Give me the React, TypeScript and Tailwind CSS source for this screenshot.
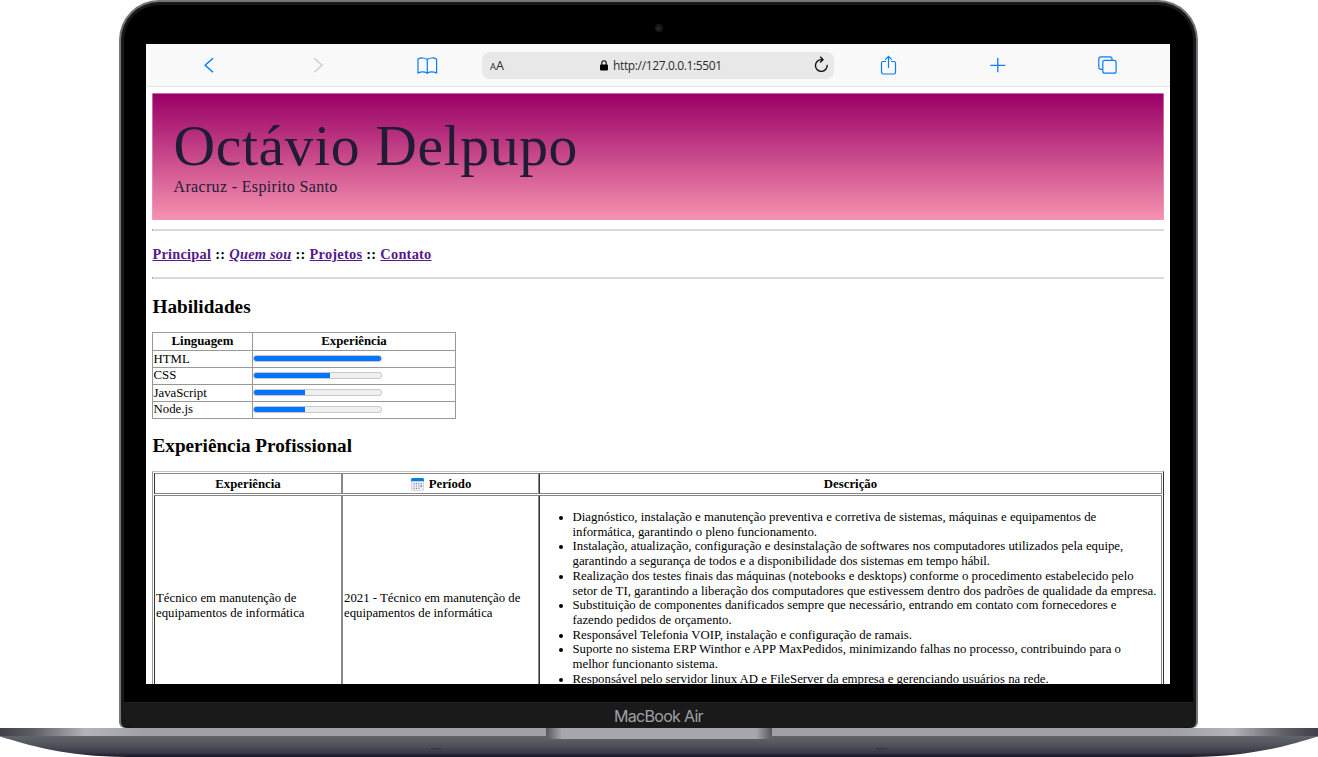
import React from "react";

const skills = [
  { name: "HTML", value: 100, row: "h-[17px] leading-[16px]" },
  { name: "CSS", value: 60, row: "h-[17px] leading-[14px]" },
  { name: "JavaScript", value: 40, row: "h-[17px] leading-[16px]" },
  { name: "Node.js", value: 40, row: "h-[17px] leading-[14px]" },
];

const duties: string[][] = [
  ["Diagnóstico, instalação e manutenção preventiva e corretiva de sistemas, máquinas e equipamentos de", "informática, garantindo o pleno funcionamento."],
  ["Instalação, atualização, configuração e desinstalação de softwares nos computadores utilizados pela equipe,", "garantindo a segurança de todos e a disponibilidade dos sistemas em tempo hábil."],
  ["Realização dos testes finais das máquinas (notebooks e desktops) conforme o procedimento estabelecido pelo", "setor de TI, garantindo a liberação dos computadores que estivessem dentro dos padrões de qualidade da empresa."],
  ["Substituição de componentes danificados sempre que necessário, entrando em contato com fornecedores e", "fazendo pedidos de orçamento."],
  ["Responsável Telefonia VOIP, instalação e configuração de ramais."],
  ["Suporte no sistema ERP Winthor e APP MaxPedidos, minimizando falhas no processo, contribuindo para o", "melhor funcionanto sistema."],
  ["Responsável pelo servidor linux AD e FileServer da empresa e gerenciando usuários na rede."],
];

function Toolbar() {
  return (
    <div className="flex h-[43px] shrink-0 border-b border-[#e4e4e4] bg-[#f9f9f9]">
      <svg width="1024" height="42" viewBox="146 44 1024 42" fill="none" stroke="#0a7cff" strokeWidth="1.2" className="absolute">
        <path d="M213 58.3 L205.2 65.3 L213 72.2" strokeWidth="1.5" />
        <path d="M314.3 58.3 L322 65.3 L314.3 72.2" stroke="#c8c8c8" />
        <path d="M427.3 59.5 V72.5 M427.3 59.5 C425 57.5 420 57.5 418 59.3 V73 C421 71.7 425 71.8 427.3 73.2 C429.5 71.8 433.5 71.7 436.6 73 V59.3 C434.5 57.5 429.5 57.5 427.3 59.5" />
        <path d="M886 61.5 H883 Q881.5 61.5 881.5 63 V72.3 Q881.5 74 883.2 74 H893.8 Q895.5 74 895.5 72.3 V63 Q895.5 61.5 894 61.5 H891 M888.5 68 V56.7 M885.3 59.6 L888.5 56.4 L891.7 59.6" />
        <path d="M990.3 65.4 H1005.3 M997.8 58 V72.3" strokeWidth="1.3" />
        <rect x="1102.8" y="60.4" width="13.3" height="12.8" rx="2" />
        <path d="M1102.5 69.3 H1101 Q1098.8 69.3 1098.8 67.1 V59 Q1098.8 56.8 1101 56.8 H1110 Q1112 56.8 1112 59 V60" />
      </svg>
      <div className="ml-[336px] mt-2 flex h-[27px] w-[352px] items-center rounded-lg bg-[#e8e8e8] text-[#2b2b2b]">
        <span className="ml-2 flex w-[14px] items-baseline pt-px font-['Open_Sans',sans-serif] leading-none"><span className="text-[9.5px]">A</span><span className="text-[12.5px]">A</span></span>
        <svg width="8" height="11" viewBox="0 0 8 11" className="ml-[95.5px]" fill="#000"><rect y="4.5" width="8" height="6" rx="1" /><path d="M1.8 5 V3 A2.2 2.2 0 0 1 6.2 3 V5" fill="none" stroke="#000" strokeWidth="1.1" /></svg>
        <span className="ml-[5.5px] w-[109px] whitespace-nowrap font-['Open_Sans',sans-serif] text-[12px] tracking-[-0.36px]">http://127.0.0.1:5501</span>
        <svg width="15" height="17" viewBox="0 0 15 17" className="mb-[2px] ml-[91.5px]" fill="none" stroke="#111" strokeWidth="1.4"><path d="M13.2 8.9 A5.9 5.9 0 1 1 7.3 3.6 H8.6 M6.2 .8 L9 3.7 L6.2 6.6" /></svg>
      </div>
    </div>
  );
}

function Skills() {
  return (
    <div className="mt-[13px] grid w-[304px] grid-cols-[100px_202px] border border-[#989898] text-[12.8px] leading-[16px]">
      <div className="h-[17px] border-r border-[#989898] text-center font-bold">Linguagem</div>
      <div className="text-center font-bold">Experiência</div>
      {skills.map((s) => (
        <React.Fragment key={s.name}>
          <div className={s.row + " border-r border-t border-[#989898] pl-[0.5px]"}>{s.name}</div>
          <div className="flex items-center border-t border-[#989898] pb-px">
            <div className="h-[7px] w-[129px] overflow-hidden rounded-[3px] border border-[#c9c9c9] bg-[#efefef]">
              <div className="-mt-px -ml-px h-[7px] bg-[#0075ff]" style={{ width: (s.value * 129) / 100 }} />
            </div>
          </div>
        </React.Fragment>
      ))}
    </div>
  );
}

function Jobs() {
  return (
    <div className="mt-[13px] w-[1012px] border border-t-[#c4c4c4] border-r-[#333] border-l-[#999] p-px font-normal text-[12.8px] leading-[14.7px]">
      <div className="grid grid-cols-[188px_197px_623px] text-center font-bold leading-[20px]">
        <div className="h-[21px] border border-[#888] border-l-[#333]">Experiência</div>
        <div className="flex h-[21px] items-center justify-center border border-[#888] pt-px pl-px">
          <svg width="13" height="13" viewBox="0 0 13 13" className="mr-[5px]"><rect x=".4" y=".4" width="12.2" height="12.2" rx="1.5" fill="#f0eef7" stroke="#c4bed0" strokeWidth=".7" /><path d="M0 3.2 V1.5 Q0 0 1.5 0 H11.5 Q13 0 13 1.5 V3.2Z" fill="#0880d8" /><path d="M2.5 5.6 H11 M2.5 8 H11 M2.5 10.4 H9" stroke="#8580a0" strokeWidth="1.1" strokeDasharray="1.1 1.3" /><rect x="9.5" y="7.4" width="1.3" height="1.3" fill="#0880d8" /></svg>
          Período
        </div>
        <div className="h-[21px] border border-[#888] border-l-[#333]">Descrição</div>
      </div>
      <div className="mt-px grid h-[223px] grid-cols-[188px_197px_623px]">
        <div className="flex items-center whitespace-nowrap border border-[#888] border-l-[#333] pb-[2px] pl-px">Técnico em manutenção de<br />equipamentos de informática</div>
        <div className="flex items-center whitespace-nowrap border border-[#888] pb-[2px] pl-px">2021 - Técnico em manutenção de<br />equipamentos de informática</div>
        <div className="border border-[#888] border-l-[#333] pt-[14px]">
          <ul className="list-disc pl-[32.5px]">
            {duties.map((lines) => (
              <li key={lines[0]}>
                {lines.map((l) => <div key={l} className="whitespace-nowrap">{l}</div>)}
              </li>
            ))}
          </ul>
        </div>
      </div>
    </div>
  );
}

export default function App() {
  return (
    <div className="flex h-[757px] w-[1318px] flex-col overflow-hidden bg-white">
      <div className="ml-[119px] h-[728px] w-[1079px] overflow-hidden rounded-b-[6px] rounded-t-[40px] bg-[#74747b] px-[2px] pt-[2px]">
        <div className="h-full rounded-b-[6px] rounded-t-[38px] bg-[#18191b] px-[3px] pt-[3px]">
          <div className="flex h-full flex-col overflow-hidden rounded-b-[10px] rounded-t-[35px] bg-black">
            <div className="flex h-[39px] shrink-0 justify-center pt-[19px]">
              <div className="flex size-[8px] items-center justify-center rounded-full bg-[#17171a]"><div className="size-[3px] rounded-full bg-[#2b2b36]" /></div>
            </div>
            <div className="ml-[22px] flex h-[640px] w-[1024px] shrink-0 flex-col overflow-hidden bg-white font-['Liberation_Serif',serif] text-black">
              <Toolbar />
              <div className="px-[6px] pt-[6px]">
                <header className="h-[127px] border-x border-t border-x-[#f0a0c0]/60 border-t-[#c56ba9] bg-linear-to-b/srgb from-[#990066] to-[#f792b0] pl-[20.5px] pt-[19px] text-[#211c35]">
                  <div className="whitespace-nowrap text-[57.6px] leading-[65px] tracking-[0.63px]">Octávio Delpupo</div>
                  <div className="text-[16px] leading-[17px] tracking-[0.34px]">Aracruz - Espirito Santo</div>
                </header>
                <div className="mt-[9px] h-[2px] border-l border-l-[#aaa] bg-[#d9d9d9]" />
                <nav className="flex h-[46px] items-center gap-[4px] pl-[0.4px] pt-[2px] text-[14.4px] font-bold tracking-[0.23px]">
                  <a className="text-[#551a8b] underline">Principal</a><span>::</span>
                  <a className="italic text-[#551a8b] underline">Quem sou</a><span>::</span>
                  <a className="text-[#551a8b] underline">Projetos</a><span>::</span>
                  <a className="text-[#551a8b] underline">Contato</a>
                </nav>
                <div className="h-[2px] border-l border-l-[#aaa] bg-[#d9d9d9]" />
                <h2 className="mt-[16px] pl-[0.5px] text-[19.2px] font-bold leading-[24px]">Habilidades</h2>
                <Skills />
                <h2 className="mt-[15px] pl-[0.5px] text-[19.2px] font-bold leading-[24px]">Experiência Profissional</h2>
                <Jobs />
              </div>
            </div>
            <div className="h-[18px] shrink-0" />
            <div className="flex grow items-center justify-center rounded-b-[9px] border-t border-[#202020] bg-[#1a1a1a] font-['Inter',sans-serif] text-[16px] tracking-[-0.7px] text-[#a1a1a5]">MacBook Air</div>
          </div>
        </div>
      </div>
      <svg width="1318" height="29" viewBox="0 0 1318 29" className="shrink-0">
        <defs>
          <linearGradient id="base" x2="0" y2="1"><stop stopColor="#62666b" offset=".25" /><stop stopColor="#53555d" offset=".55" /><stop stopColor="#393947" offset=".85" /><stop stopColor="#171522" offset="1" /></linearGradient>
          <linearGradient id="lip"><stop stopColor="#3f404a" /><stop offset=".025" stopColor="#5c5e64" /><stop offset=".065" stopColor="#b3b4b8" /><stop offset=".11" stopColor="#a0a1a6" /><stop offset=".89" stopColor="#a0a1a6" /><stop offset=".935" stopColor="#b3b4b8" /><stop offset=".975" stopColor="#5c5e64" /><stop offset="1" stopColor="#3f404a" /></linearGradient>
          <linearGradient id="notch"><stop stopColor="#55565d" /><stop offset=".07" stopColor="#a6a7ac" /><stop offset=".93" stopColor="#a6a7ac" /><stop offset="1" stopColor="#55565d" /></linearGradient>
        </defs>
        <path d="M0 0 H1318 V8.5 C1289 17 1255 28.5 1190 29 H128 C63 28.5 29 17 0 8.5Z" fill="url(#base)" />
        <path d="M0 0 H1318 V8 H0Z" fill="url(#lip)" />
        <path d="M546 0 H772 V7 Q771 11 765 11 H553 Q547 11 546 7Z" fill="url(#notch)" />
        <path d="M431 20.7 H441 M876 20.7 H887" stroke="#303139" strokeWidth="1" />
      </svg>
    </div>
  );
}
